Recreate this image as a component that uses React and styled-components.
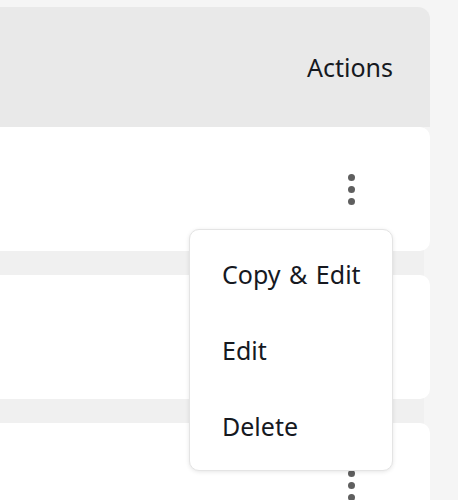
import React, { useState } from "react";
import styled, { createGlobalStyle } from "styled-components";

const GlobalStyle = createGlobalStyle`
  body {
    margin: 0;
    background: #f5f5f5;
    font-family: "Noto Sans", "Open Sans", sans-serif;
    color: #16191f;
  }
`;

const Table = styled.div`
  width: 430px;
  padding-top: 7px;
`;

const HeaderRow = styled.div`
  display: flex;
  justify-content: flex-end;
  align-items: center;
  height: 120px;
  padding-right: 37px;
  background: #e9e9e9;
  border-radius: 0 12px 0 0;
  box-sizing: border-box;
`;

const ActionsCell = styled.div`
  position: relative;
  display: flex;
  justify-content: center;
  width: 86px;
  font-size: 25px;
  padding-left: ${(p) => (p.$body ? "3px" : "0")};
  box-sizing: border-box;
`;

const Body = styled.div`
  display: flex;
  flex-direction: column;
  gap: 24px;
  width: 424px;
  background: #f0f0f0;
`;

const Row = styled.div`
  display: flex;
  justify-content: flex-end;
  align-items: center;
  width: 430px;
  height: 124px;
  padding-right: 37px;
  background: #fff;
  border-radius: 0 10px 10px 0;
  box-sizing: border-box;
`;

const KebabButton = styled.button`
  display: flex;
  flex-direction: column;
  align-items: center;
  justify-content: center;
  gap: 5px;
  width: 40px;
  height: 40px;
  padding: 0;
  border: none;
  background: transparent;
  cursor: pointer;
`;

const Dot = styled.span`
  width: 7px;
  height: 7px;
  border-radius: 50%;
  background: #5f5f5f;
`;

const Menu = styled.ul`
  position: absolute;
  top: calc(100% + 20px);
  right: 0;
  z-index: 10;
  width: 204px;
  margin: 0;
  padding: 6px 0;
  list-style: none;
  background: #fff;
  border: 1px solid #e4e4e4;
  border-radius: 10px;
  box-shadow: 0 1px 4px rgba(0, 0, 0, 0.1);
  box-sizing: border-box;
`;

const MenuItem = styled.li`
  display: flex;
  align-items: center;
  height: 76px;
  padding-left: 32px;
  font-size: 25px;
  word-spacing: 2px;
  color: #16191f;
  white-space: nowrap;
  cursor: pointer;
`;

const rows = [{ id: 1 }, { id: 2 }, { id: 3 }];

const menuItems = ["Copy & Edit", "Edit", "Delete"];

export default function App() {
  const [openId, setOpenId] = useState(1);

  return (
    <>
      <GlobalStyle />
      <Table>
        <HeaderRow>
          <ActionsCell>Actions</ActionsCell>
        </HeaderRow>
        <Body>
          {rows.map((row) => (
            <Row key={row.id}>
              <ActionsCell $body>
                <KebabButton
                  aria-label="Row actions"
                  onClick={() => setOpenId(openId === row.id ? null : row.id)}>
                  <Dot />
                  <Dot />
                  <Dot />
                </KebabButton>
                {openId === row.id && (
                  <Menu>
                    {menuItems.map((label) => (
                      <MenuItem key={label}>{label}</MenuItem>
                    ))}
                  </Menu>
                )}
              </ActionsCell>
            </Row>
          ))}
        </Body>
      </Table>
    </>
  );
}
